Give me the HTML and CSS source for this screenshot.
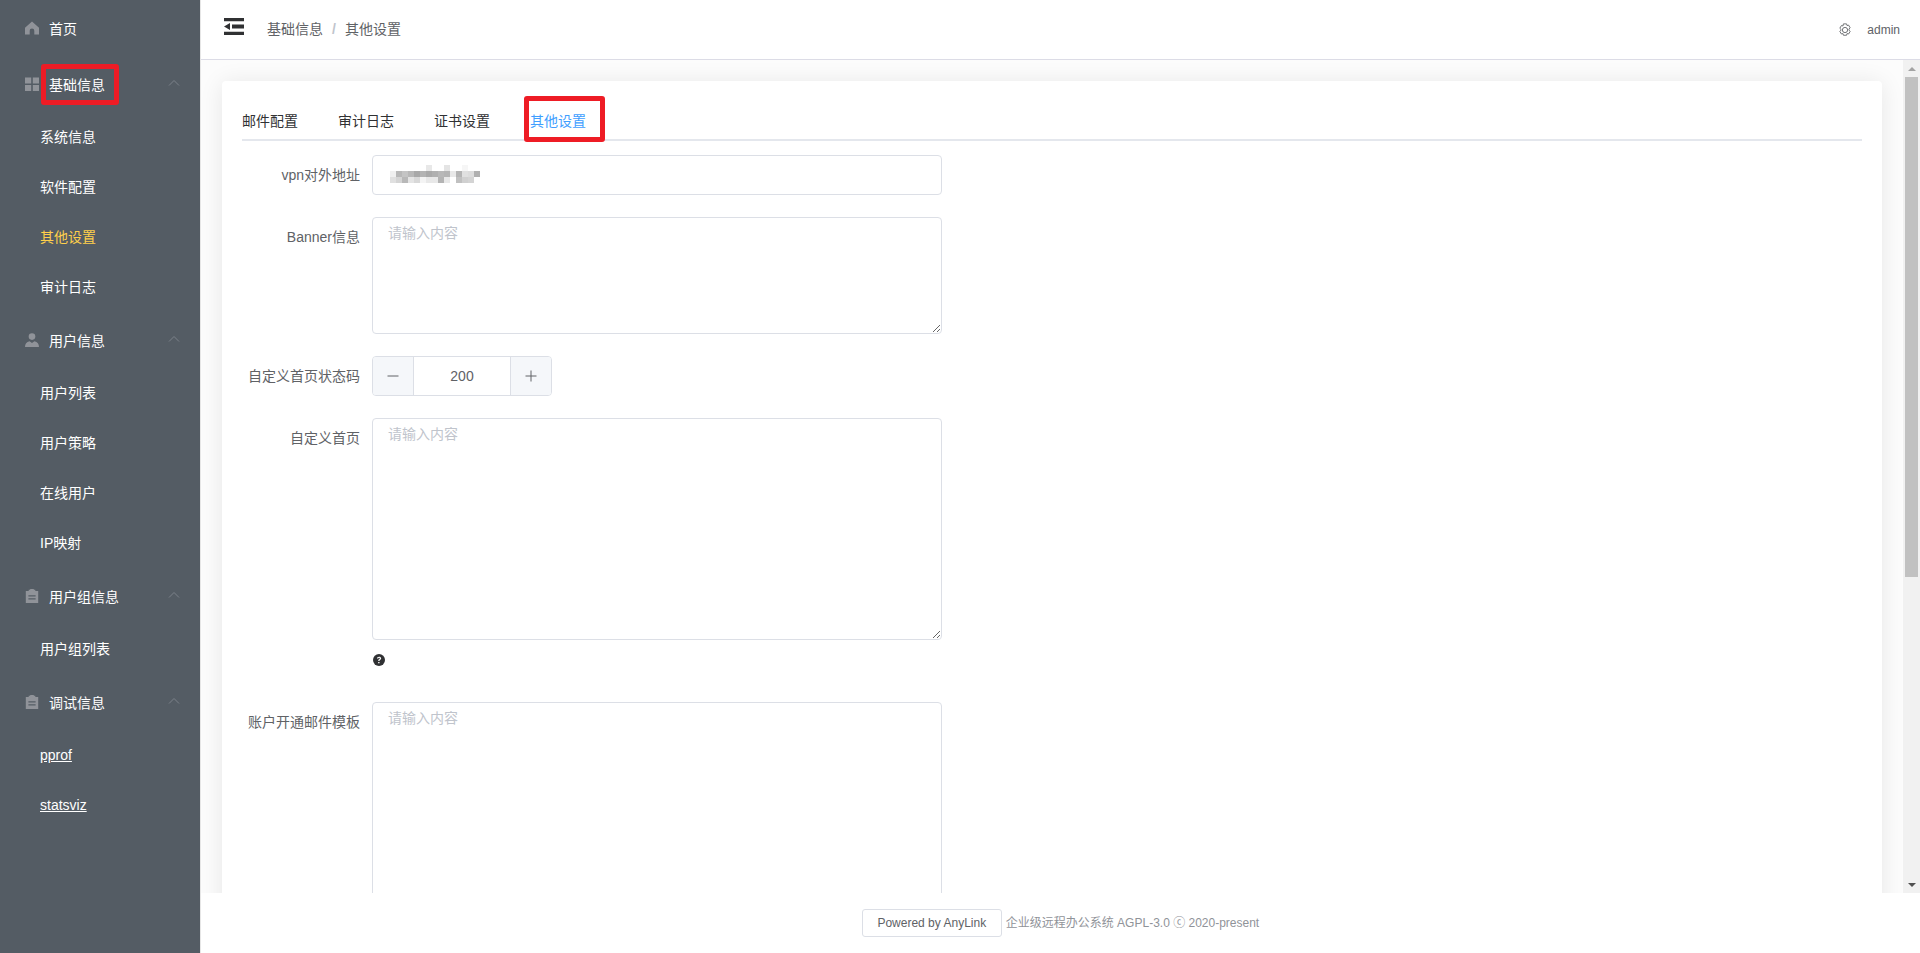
FILE: index.html
```html
<!DOCTYPE html>
<html lang="zh-CN">
<head>
    <meta charset="UTF-8">
    <title>AnyLink 其他设置</title>
    <link rel="stylesheet" href="styles.css">
</head>
<body>
    <aside class="sidebar">
        <div class="menu-title">
            <svg class="menu-icon" viewBox="0 0 14 14"><path d="M7 .5 14 6.800V13.500H9.300V9.800a2.300 2.300 0 0 0-4.600 0v3.700H0V6.800z" fill="#909399"/></svg>
            <span>首页</span>
        </div>
        <div class="menu-title">
            <svg class="menu-icon" viewBox="0 0 14 14"><path d="M0 .5h6.200v6H0zM7.800 .5H14v6H7.800zM0 8h6.200v6H0zM7.800 8H14v6H7.800z" fill="#909399"/></svg>
            <span>基础信息</span>
            <svg class="arrow" viewBox="0 0 12 8"><path d="M1 6.500 6 1.500l5 5" fill="none" stroke="#7c828a" stroke-width="1"/></svg>
        </div>
        <a class="menu-item">系统信息</a>
        <a class="menu-item">软件配置</a>
        <a class="menu-item active">其他设置</a>
        <a class="menu-item">审计日志</a>
        <div class="menu-title">
            <svg class="menu-icon" viewBox="0 0 14 14"><circle cx="7" cy="3.600" r="3.300" fill="#909399"/><path d="M0 14c0-3.200 1.400-4.900 4.600-5.800L7 10l2.400-1.800c3.200.9 4.600 2.600 4.600 5.800z" fill="#909399"/></svg>
            <span>用户信息</span>
            <svg class="arrow" viewBox="0 0 12 8"><path d="M1 6.500 6 1.500l5 5" fill="none" stroke="#7c828a" stroke-width="1"/></svg>
        </div>
        <a class="menu-item">用户列表</a>
        <a class="menu-item">用户策略</a>
        <a class="menu-item">在线用户</a>
        <a class="menu-item">IP映射</a>
        <div class="menu-title">
            <svg class="menu-icon" viewBox="0 0 14 14"><path d="M.8 2h2.900V.8h1.500V0h3.600v.8h1.500V2h2.900v12H.8zM3.400 6.300v1.200h7.200V6.300zm0 3v1.200h7.200V9.300z" fill="#909399" fill-rule="evenodd"/></svg>
            <span>用户组信息</span>
            <svg class="arrow" viewBox="0 0 12 8"><path d="M1 6.500 6 1.500l5 5" fill="none" stroke="#7c828a" stroke-width="1"/></svg>
        </div>
        <a class="menu-item">用户组列表</a>
        <div class="menu-title">
            <svg class="menu-icon" viewBox="0 0 14 14"><path d="M.8 2h2.900V.8h1.500V0h3.600v.8h1.500V2h2.900v12H.8zM3.400 6.300v1.200h7.200V6.300zm0 3v1.200h7.200V9.300z" fill="#909399" fill-rule="evenodd"/></svg>
            <span>调试信息</span>
            <svg class="arrow" viewBox="0 0 12 8"><path d="M1 6.500 6 1.500l5 5" fill="none" stroke="#7c828a" stroke-width="1"/></svg>
        </div>
        <a class="menu-item link">pprof</a>
        <a class="menu-item link">statsviz</a>
    </aside>

    <div class="wrap">
        <header class="topbar">
            <svg class="fold" viewBox="0 0 20 17"><path d="M0 0h20v3.300H0zM8 6.500h12v4H8zM0 13.700h20V17H0zM0 8.500 6 5v7z" fill="#303133"/></svg>
            <div class="crumbs">基础信息<span class="sep">/</span>其他设置</div>
            <div class="user">
                <svg class="gear" viewBox="0 0 16 16"><path d="M6.200 1h3.600l.5 1.900 1.800-.5 1.800 3.100-1.400 1.400v1.200l1.400 1.400-1.800 3.100-1.800-.5-.5 1.900H6.200l-.5-1.900-1.800.5-1.800-3.100 1.400-1.400V7.400L2.100 6l1.800-3.100 1.800.5z" fill="none" stroke="#606266" stroke-width="1"/><circle cx="8" cy="8" r="3" fill="none" stroke="#606266" stroke-width="1"/></svg>
                <span>admin</span>
            </div>
        </header>

        <main class="main">
            <div class="scroll-area">
                <section class="card">
                    <nav class="tabs">
                        <a class="tab">邮件配置</a>
                        <a class="tab">审计日志</a>
                        <a class="tab">证书设置</a>
                        <a class="tab current">其他设置</a>
                    </nav>
                    <span class="mark mark-tab"></span>

                    <form class="form">
                        <div class="row">
                            <label>vpn对外地址</label>
                            <div class="input">
                                <svg class="mosaic" width="102" height="18" viewBox="0 0 102 18" shape-rendering="crispEdges">
                                    <rect x="36" y="0" width="6" height="6" fill="#e8e8e8"/>
                                    <rect x="54" y="0" width="6" height="6" fill="#e4e4e4"/>
                                    <rect x="72" y="0" width="6" height="6" fill="#f6f6f6"/>
                                    <rect x="0" y="6" width="6" height="6" fill="#f0f0f0"/>
                                    <rect x="6" y="6" width="6" height="6" fill="#b8b8b8"/>
                                    <rect x="12" y="6" width="6" height="6" fill="#c4c4c4"/>
                                    <rect x="18" y="6" width="6" height="6" fill="#b8b8b8"/>
                                    <rect x="24" y="6" width="6" height="6" fill="#a8a8a8"/>
                                    <rect x="30" y="6" width="6" height="6" fill="#b4b4b4"/>
                                    <rect x="36" y="6" width="6" height="6" fill="#aaaaaa"/>
                                    <rect x="42" y="6" width="6" height="6" fill="#b0b0b0"/>
                                    <rect x="48" y="6" width="6" height="6" fill="#b8b8b8"/>
                                    <rect x="54" y="6" width="6" height="6" fill="#b4b4b4"/>
                                    <rect x="60" y="6" width="6" height="6" fill="#e8e8e8"/>
                                    <rect x="66" y="6" width="6" height="6" fill="#b4b4b4"/>
                                    <rect x="72" y="6" width="6" height="6" fill="#e0e0e0"/>
                                    <rect x="78" y="6" width="6" height="6" fill="#dcdcdc"/>
                                    <rect x="84" y="6" width="6" height="6" fill="#b0b0b0"/>
                                    <rect x="0" y="12" width="6" height="6" fill="#e0e0e0"/>
                                    <rect x="6" y="12" width="6" height="6" fill="#d4d4d4"/>
                                    <rect x="12" y="12" width="6" height="6" fill="#b8b8b8"/>
                                    <rect x="18" y="12" width="6" height="6" fill="#e4e4e4"/>
                                    <rect x="24" y="12" width="6" height="6" fill="#d8d8d8"/>
                                    <rect x="30" y="12" width="6" height="6" fill="#f4f4f4"/>
                                    <rect x="36" y="12" width="12" height="6" fill="#e8e8e8"/>
                                    <rect x="48" y="12" width="6" height="6" fill="#b4b4b4"/>
                                    <rect x="54" y="12" width="6" height="6" fill="#e8e8e8"/>
                                    <rect x="66" y="12" width="6" height="6" fill="#c0c0c0"/>
                                    <rect x="72" y="12" width="6" height="6" fill="#d0d0d0"/>
                                    <rect x="78" y="12" width="6" height="6" fill="#d4d4d4"/>
                                </svg>
                            </div>
                        </div>
                        <div class="row">
                            <label>Banner信息</label>
                            <textarea class="text h-banner" placeholder="请输入内容"></textarea>
                        </div>
                        <div class="row">
                            <label>自定义首页状态码</label>
                            <div class="number">
                                <span class="step">
                                    <svg width="12" height="12" viewBox="0 0 12 12"><path d="M.5 6h11" stroke="#606266" stroke-width="1"/></svg>
                                </span>
                                <span class="count">200</span>
                                <span class="step">
                                    <svg width="12" height="12" viewBox="0 0 12 12"><path d="M.5 6h11M6 .5v11" stroke="#606266" stroke-width="1"/></svg>
                                </span>
                            </div>
                        </div>
                        <div class="row row-help">
                            <label>自定义首页</label>
                            <div class="field">
                                <textarea class="text h-home" placeholder="请输入内容"></textarea>
                                <svg class="help" viewBox="0 0 14 14"><circle cx="7" cy="7" r="7" fill="#303133"/><path d="M4.600 5.300C4.700 3.900 5.700 3.100 7.100 3.100c1.400 0 2.400.8 2.400 2 0 .9-.5 1.400-1.200 1.900-.6.4-.8.6-.8 1.300H6.100c0-1.100.3-1.600 1-2.100.5-.4.8-.6.8-1 0-.4-.3-.7-.8-.7-.6 0-.9.3-1 .8zM6 9.200h1.600v1.600H6z" fill="#fff"/></svg>
                            </div>
                        </div>
                        <div class="row">
                            <label>账户开通邮件模板</label>
                            <textarea class="text h-mail" placeholder="请输入内容"></textarea>
                        </div>
                    </form>
                </section>
            </div>
            <div class="scrollbar">
                <span class="scroll-btn"><i class="tri-up"></i></span>
                <div class="scroll-track"><div class="scroll-thumb"></div></div>
                <span class="scroll-btn"><i class="tri-down"></i></span>
            </div>
        </main>

        <footer class="footer">
            <button type="button" class="powered">Powered by AnyLink</button>
            <span class="about">企业级远程办公系统 AGPL-3.0 ⓒ 2020-present</span>
        </footer>
    </div>

    <span class="mark mark-menu"></span>
</body>
</html>
```

FILE: styles.css
```css
* { box-sizing: border-box; }

body {
    margin: 0;
    height: 100vh;
    display: flex;
    overflow: hidden;
    font-family: "Liberation Sans", "Noto Sans CJK SC", sans-serif;
    font-size: 14px;
    color: #606266;
    background: #fff;
}

/* sidebar */
.sidebar {
    width: 200px;
    flex-shrink: 0;
    background: #545c64;
    color: #fff;
}
.menu-title {
    height: 56px;
    padding: 0 20px;
    display: flex;
    align-items: center;
}
.menu-icon {
    width: 14px;
    height: 14px;
    margin: 0 10px 0 5px;
    flex-shrink: 0;
}
.arrow {
    width: 12px;
    height: 8px;
    margin-left: auto;
    margin-bottom: 3px;
}
.menu-item {
    display: block;
    height: 50px;
    line-height: 50px;
    padding-left: 40px;
}
.menu-item.active { color: #ffd04b; }
.menu-item.link { text-decoration: underline; }

/* right side */
.wrap {
    flex: 1;
    min-width: 0;
    display: flex;
    flex-direction: column;
    border-left: 1px solid #e6e6e6;
}
.topbar {
    height: 60px;
    flex-shrink: 0;
    display: flex;
    align-items: center;
    padding: 0 20px 0 23px;
    border-bottom: 1px solid #dcdce6;
}
.fold {
    width: 20px;
    height: 17px;
    margin: 0 23px 6px 0;
}
.crumbs { margin-bottom: 4px; }
.sep {
    margin: 0 9px;
    font-weight: 700;
    color: #c0c4cc;
}
.user {
    margin-left: auto;
    display: flex;
    align-items: center;
    font-size: 12px;
}
.gear {
    width: 14px;
    height: 14px;
    margin-right: 15px;
}

.main {
    flex: 1;
    min-height: 0;
    display: flex;
    background: #fcfcfc;
}
.scroll-area {
    flex: 1;
    min-width: 0;
    overflow: hidden;
    padding: 21px 21px 0;
}

/* headless browser hides the real bar, so it is drawn */
.scrollbar {
    width: 17px;
    flex-shrink: 0;
    display: flex;
    flex-direction: column;
    background: #f1f1f1;
}
.scroll-btn {
    height: 17px;
    flex-shrink: 0;
    display: flex;
    align-items: center;
    justify-content: center;
}
.tri-up {
    border: 4px solid transparent;
    border-top: 0;
    border-bottom: 4px solid #a3a3a3;
}
.tri-down {
    border: 4px solid transparent;
    border-bottom: 0;
    border-top: 4px solid #505050;
}
.scroll-track {
    flex: 1;
    padding: 0 2px;
}
.scroll-thumb {
    height: 500px;
    background: #c1c1c1;
}

.card {
    position: relative;
    height: 1250px;
    padding: 20px;
    background: #fff;
    border-radius: 4px;
    box-shadow: 0 2px 24px rgba(0, 0, 0, .09);
}
.tabs {
    display: flex;
    height: 40px;
    margin-bottom: 14px;
    border-bottom: 2px solid #e4e7ed;
}
.tab {
    height: 40px;
    line-height: 40px;
    padding: 0 20px;
    color: #303133;
}
.tab:first-child { padding-left: 0; }
.tab.current { color: #409eff; }

/* form */
.row {
    display: flex;
    margin-bottom: 22px;
}
.row label {
    width: 130px;
    flex-shrink: 0;
    padding-right: 12px;
    text-align: right;
    line-height: 40px;
}
.input {
    width: 570px;
    height: 40px;
    padding: 9px 17px;
    border: 1px solid #dcdfe6;
    border-radius: 4px;
}
.mosaic { display: block; }
.text {
    display: block;
    width: 570px;
    padding: 5px 15px;
    border: 1px solid #dcdfe6;
    border-radius: 4px;
    font: inherit;
    line-height: 1.5;
    color: #606266;
    resize: vertical;
    outline: none;
}
.text::placeholder { color: #c0c4cc; }
.h-banner { height: 117px; }
.h-home { height: 222px; }
.h-mail { height: 300px; }

.number {
    width: 180px;
    height: 40px;
    display: flex;
    border: 1px solid #dcdfe6;
    border-radius: 4px;
    overflow: hidden;
}
.step {
    width: 41px;
    flex-shrink: 0;
    display: flex;
    align-items: center;
    justify-content: center;
    background: #f5f7fa;
}
.step:first-child { border-right: 1px solid #dcdfe6; }
.step:last-child { border-left: 1px solid #dcdfe6; }
.count {
    flex: 1;
    text-align: center;
    line-height: 38px;
}

.row-help { margin-bottom: 0; }
.field { height: 284px; }
.help {
    display: block;
    width: 12px;
    height: 12px;
    margin: 14px 0 0 1px;
}

.footer {
    height: 60px;
    flex-shrink: 0;
    display: flex;
    align-items: center;
    justify-content: center;
    font-size: 12px;
}
.powered {
    width: 140px;
    height: 28px;
    padding: 0;
    margin-right: 4px;
    border: 1px solid #dcdfe6;
    border-radius: 3px;
    font: inherit;
    color: #606266;
    background: #fff;
}
.about {
    margin-bottom: 3px;
    color: #909399;
}

/* red marks drawn on the screenshot */
.mark {
    position: absolute;
    border: 5px solid #ee1c25;
    border-radius: 3px;
}
.mark-menu {
    left: 41px;
    top: 64px;
    width: 78px;
    height: 41px;
}
.mark-tab {
    left: 302px;
    top: 15px;
    width: 81px;
    height: 46px;
}
```
